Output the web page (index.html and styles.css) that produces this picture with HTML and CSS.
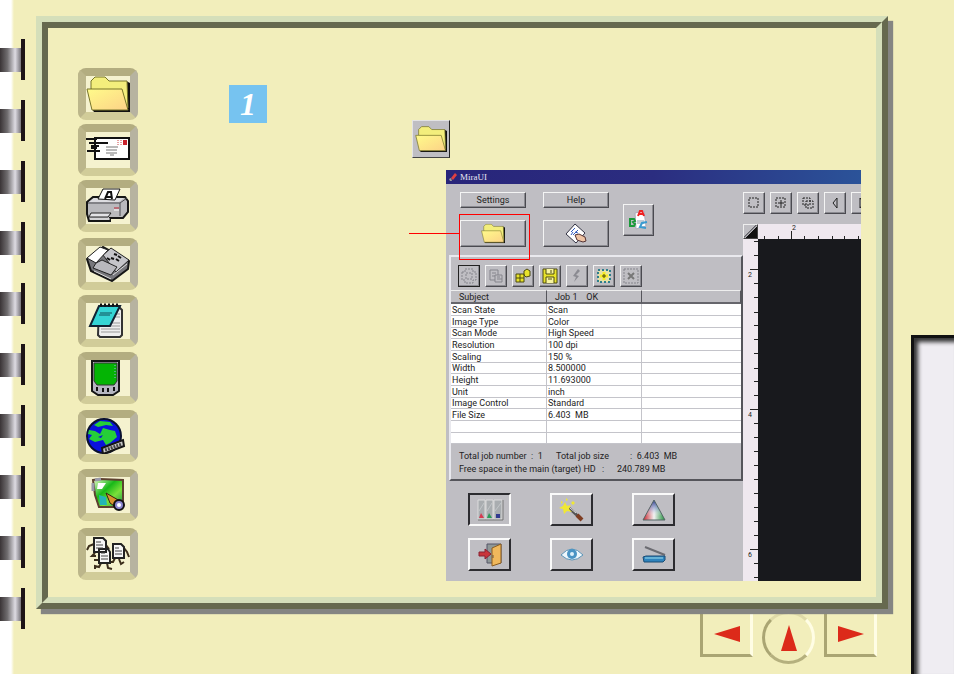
FILE: index.html
```html
<!DOCTYPE html>
<html lang="en">
<head>
  <meta charset="UTF-8" />
  <meta name="viewport" content="width=device-width, initial-scale=1.0" />
  <title>MiraUI</title>
  <link rel="stylesheet" href="styles.css">
</head>
<body>
  <svg class="defs" aria-hidden="true">
    <defs>
      <linearGradient id="paper" x1="0" y1="0" x2="1" y2="1">
        <stop offset="0" stop-color="#fffb8a"/><stop offset="1" stop-color="#fcd287"/>
      </linearGradient>
      <linearGradient id="map" x1="0" y1="0" x2="1" y2="1">
        <stop offset="0" stop-color="#f4ffd0"/><stop offset=".4" stop-color="#18b818"/><stop offset=".65" stop-color="#7be03a"/><stop offset="1" stop-color="#128a50"/>
      </linearGradient>
      <linearGradient id="tri" x1="0" y1="1" x2="1" y2="1">
        <stop offset="0" stop-color="#c8202a"/><stop offset=".5" stop-color="#f2f2f2"/><stop offset="1" stop-color="#1f8f3a"/>
      </linearGradient>
      <linearGradient id="triTop" x1="0" y1="0" x2="0" y2="1">
        <stop offset="0" stop-color="#1b2a80"/><stop offset=".5" stop-color="#8fa0d8" stop-opacity=".4"/><stop offset=".8" stop-color="#fff" stop-opacity="0"/>
      </linearGradient>
      <symbol id="folder" viewBox="0 0 44 36">
        <path d="M40 5 L44 7 V36 H8 L6 33 Z" fill="#111"/>
        <path d="M5 13 V5 L9 1 H19 L23 5 H41 L42 32 Z" fill="#f3ee7c" stroke="#77752a"/>
        <path d="M1 13 H36 L42 34 H6 Z" fill="url(#paper)" stroke="#77752a"/>
      </symbol>
    </defs>
  </svg>

  <div class="page">
    <div class="spine">
      <i class="ring"></i><i class="ring"></i><i class="ring"></i><i class="ring"></i><i class="ring"></i>
      <i class="ring"></i><i class="ring"></i><i class="ring"></i><i class="ring"></i><i class="ring"></i>
    </div>

    <main class="main">
      <div class="frame">
        <div class="frame-inner">
          <nav class="sidebar">
            <div class="group tight">
              <button class="key" aria-label="Files"><svg viewBox="0 0 44 36"><use href="#folder"/></svg></button>
              <button class="key" aria-label="E-mail">
                <svg viewBox="0 0 44 36">
                  <rect x="9" y="6" width="34" height="21" fill="#fff" stroke="#111" stroke-width="2"/>
                  <path d="M0 7 H11 M3 11 H22 M5 14 H13 M1 19 H14 M5 16 H11" stroke="#111" stroke-width="2"/>
                  <path d="M20 15 H32 M20 18 H31 M20 21 H31 M24 23 H28" stroke="#777"/>
                  <path d="M32 8 V13 M35 8 V13" stroke="#c44" stroke-dasharray="1 1"/>
                  <rect x="37" y="8" width="4" height="5" fill="#c9222c"/>
                </svg>
              </button>
              <button class="key" aria-label="Print">
                <svg viewBox="0 0 44 36">
                  <path d="M1 14 L7 9 H39 L42 13 V24 L37 30 H24 V33 H3 L1 26 Z" fill="#b9b9bd" stroke="#161616" stroke-width="2"/>
                  <path d="M3 14 H33 L38 10 H8 Z" fill="#dcdce0"/>
                  <path d="M12 11 L17 1 H34 L29 12 Z" fill="#fff" stroke="#111"/>
                  <path d="M19 11 L22 4 H25 L26 11 M20 9 H26" fill="none" stroke="#111" stroke-width="2"/>
                  <path d="M2 15 H34 L41 10 M34 15 V28" stroke="#4b4b50" fill="none"/>
                  <path d="M5 25 H25 L22 29 H3 Z" fill="#e3e3e6" stroke="#222"/>
                  <path d="M4 31 H24" stroke="#eee"/>
                  <path d="M28 20 H33" stroke="#b23" stroke-width="1"/><path d="M28 22 H33" stroke="#fff"/>
                </svg>
              </button>
            </div>
            <div class="group">
              <button class="key" aria-label="Fax">
                <svg viewBox="0 0 44 36">
                  <path d="M1 13 L17 1 L43 15 L42 23 L26 35 L5 25 Z" fill="#77777c" stroke="#161616" stroke-width="2"/>
                  <path d="M17 9 L25 2 L43 14 L30 26 Z" fill="#c5c5ca" stroke="#222"/>
                  <path d="M1 12 L14 1 L22 4 L10 17 Z" fill="#fff" stroke="#222"/>
                  <path d="M10 17 L16 14 L31 21 L25 29 L7 22 Z" fill="#b8b8bd" stroke="#222"/>
                  <path d="M8 25 L25 33 M27 29 L41 18" stroke="#ddd"/>
                  <path d="M28 8 L31 9 M32 10 L35 12 M25 12 L28 13 M30 13 L33 15 M21 12 L24 14" stroke="#111" stroke-width="2"/>
                </svg>
              </button>
              <button class="key" aria-label="Text">
                <svg viewBox="0 0 44 36">
                  <path d="M13 5 H34 L36 7 V32 L34 34 H14 L12 32 Z" fill="#eee" stroke="#333" stroke-width="2"/>
                  <path d="M15 20 H34 M15 23 H34 M15 26 H34 M15 29 H34 M25 14 H34 M27 11 H34" stroke="#999"/>
                  <path d="M13 3 H34 L24 23 H4 Z" fill="#35d5d5" stroke="#123" stroke-width="2"/>
                  <path d="M14 10 H26 M13 12 H24" stroke="#124e58"/>
                  <path d="M14 2 H34" stroke="#111" stroke-width="3" stroke-dasharray="2 2"/>
                </svg>
              </button>
              <button class="key" aria-label="Palm">
                <svg viewBox="0 0 44 36">
                  <path d="M6 1 H33 V31 L27 35 H12 L6 31 Z" fill="#b5b5c0" stroke="#161616" stroke-width="2"/>
                  <path d="M8 3 H31 V21 L28 25 H11 L8 21 Z" fill="#04b404" stroke="#333"/>
                  <path d="M29 5 V20" stroke="#9ae" stroke-dasharray="1 2"/>
                  <path d="M10 29 H12 M16 30 H18 M21 30 H23 M27 29 H29" stroke="#111" stroke-width="4"/>
                </svg>
              </button>
            </div>
            <div class="group loose">
              <button class="key" aria-label="Web">
                <svg viewBox="0 0 44 36">
                  <circle cx="18" cy="18" r="17" fill="#0a12dc" stroke="#0a1030" stroke-width="2"/>
                  <path d="M3 12 L9 13 L14 16 L17 10 L24 12 L29 13 L31 19 L24 25 L20 27 L17 22 L9 24 L3 21 L6 17 L2 16 Z" fill="#25cf38"/>
                  <path d="M8 7 L14 3 L24 4 L27 8 L20 7 L12 9 Z" fill="#25cf38"/>
                  <path d="M12 19 L17 17 L15 20 Z" fill="#0a12dc"/>
                  <path d="M16 30 L37 22 L38 28 L17 36 Z" fill="#ccc" stroke="#161616" stroke-width="2"/>
                  <path d="M19 32 L36 26" stroke="#444" stroke-width="3" stroke-dasharray="2 1"/>
                </svg>
              </button>
              <button class="key" aria-label="Image">
                <svg viewBox="0 0 44 36">
                  <path d="M7 3 L14 2 L37 3 V26 L34 30 H13 L9 18 Z" fill="url(#map)" stroke="#5d4030" stroke-width="2"/>
                  <path d="M12 6 H20 L16 12 H11 Z" fill="#fff"/>
                  <path d="M13 18 L20 20 L21 28 H14 Z" fill="#22b5b5"/>
                  <path d="M7 6 V14 M9 3 L15 2" stroke="#99a" stroke-width="3"/>
                  <path d="M20 16 L34 24 L31 31 L24 26 Z" fill="#d9942e" stroke="#321"/>
                  <circle cx="33" cy="28" r="5" fill="#8b86d0" stroke="#111" stroke-width="2"/>
                  <circle cx="33" cy="28" r="2" fill="#fff"/>
                </svg>
              </button>
              <button class="key" aria-label="Copies">
                <svg viewBox="0 0 44 36">
                  <path d="M8 8 L3 10 L1 14 M9 17 L6 20 H10 M13 24 L8 24 M15 27 L13 31 L9 30 V33 M21 27 L22 32 L26 33 M33 23 L35 28 L38 26 M29 22 L27 26 H24 M38 12 L41 16 L43 21 M20 9 L23 13" stroke="#3c2e1c" stroke-width="2" fill="none"/>
                  <path d="M8 2 H17 L20 5 V16 H8 Z M27 8 H35 L38 11 V22 H27 Z M13 13 H22 L24 16 V27 H13 Z" fill="#f6f6f6" stroke="#222" stroke-width="2"/>
                  <path d="M10 6 H15 M10 9 H17 M10 12 H17 M29 12 H33 M29 15 H36 M29 18 H36 M15 17 H19 M15 20 H22 M15 23 H22" stroke="#444"/>
                </svg>
              </button>
            </div>
          </nav>

          <section class="content">
            <div class="step">
              <span class="step-number">1</span>
              <button class="folder-button" aria-label="Scan to file"><svg viewBox="0 0 44 36"><use href="#folder"/></svg></button>
            </div>

            <div class="window">
              <header class="title-bar">
                <svg viewBox="0 0 10 10"><path d="M3 6 L7 1 L9 3 L5 8 Z" fill="#e04040"/><path d="M1 7 L3 6 L4 9 L2 9 Z" fill="#999"/></svg>
                <h1>MiraUI</h1>
              </header>

              <div class="window-body">
                <div class="controls">
                  <div class="main-buttons">
                    <button class="btn small">Settings</button>
                    <button class="btn small">Help</button>
                    <button class="btn wide target" aria-label="Scan to folder"><svg class="icon-folder" viewBox="0 0 44 36"><use href="#folder"/></svg></button>
                    <button class="btn wide" aria-label="Preview page">
                      <svg class="icon-page" viewBox="0 0 22 22">
                        <path d="M10 1 L20 10 L11 20 L1 11 Z" fill="#fff" stroke="#334"/>
                        <path d="M6 9 L10 5 M8 12 L13 7 M6 12 L8 9 M10 9 L13 10" stroke="#335bbd"/>
                        <path d="M10 12 L14 11 L20 14 L21 18 L18 19 L12 17 Z" fill="#eec3a4" stroke="#533"/>
                      </svg>
                    </button>
                    <button class="btn ocr" aria-label="Text recognition">
                      <svg viewBox="0 0 24 24">
                        <path d="M8 5 L17 3 L19 18 L9 21 Z" fill="#fff" stroke="#aab"/>
                        <path d="M10 13 H17 M10 15 H17" stroke="#89a"/>
                        <path d="M11 8 L13 3 H15 L17 8 M12 6 H16" fill="none" stroke="#e22" stroke-width="2"/>
                        <path d="M3 11 H7 L8 13 L6 14 L8 16 L7 18 H3 Z" fill="none" stroke="#1a9a3a" stroke-width="2"/>
                        <path d="M20 14 L15 15 L13 19 L19 20" fill="none" stroke="#3a9bd0" stroke-width="2"/>
                      </svg>
                    </button>
                  </div>

                  <div class="job-box">
                    <div class="job-tools">
                      <button class="tool focus" aria-label="Select"><svg viewBox="0 0 16 16"><path class="ghost" d="M1 4 H4 V1 H12 V4 H15 V12 H12 V15 H4 V12 H1 Z M5 5 H11 V11 H5 Z"/></svg></button>
                      <button class="tool" aria-label="Copy"><svg viewBox="0 0 16 16"><path class="ghost solid" d="M2 2 H10 V7 M2 2 V12 H7 M4 5 H8 M4 8 H7 M7 7 H14 V14 H7 Z M9 9 H12 M9 11 H14"/></svg></button>
                      <button class="tool" aria-label="Job queue"><svg viewBox="0 0 16 16"><path d="M1 6 H9 V14 H1 Z M5 6 V14 M1 10 H9 M9 3 L12 1 L15 3 V8 L11 9 L9 7 Z" fill="#e8e32a" stroke="#4d4a10"/></svg></button>
                      <button class="tool" aria-label="Save"><svg viewBox="0 0 16 16"><path d="M1 1 H15 V15 H1 Z" fill="#e8e32a" stroke="#4d4a10"/><path d="M4 1 V6 H12 V1 M4 15 V9 H12 V15 M6 11 H10 M9 2 V5" fill="#f8f5a0" stroke="#4d4a10"/></svg></button>
                      <button class="tool" aria-label="Run"><svg viewBox="0 0 16 16"><path d="M9 1 L11 3 L7 7 L10 8 L5 14 L7 9 L4 8 Z" fill="#8b8b92"/></svg></button>
                      <button class="tool" aria-label="Add"><svg viewBox="0 0 16 16"><rect x="2" y="2" width="12" height="12" fill="#e6e2a4" stroke="#2d7f8c" stroke-width="2" stroke-dasharray="2 2"/><path d="M8 4 V12 M4 8 H12" stroke="#f6ee20" stroke-width="3"/><path d="M8 6 V10 M6 8 H10" stroke="#4d4a10"/></svg></button>
                      <button class="tool" aria-label="Remove"><svg viewBox="0 0 16 16"><path class="ghost" d="M1 1 H15 V15 H1 Z"/><path d="M5 5 L11 11 M11 5 L5 11" stroke="#777" stroke-width="2"/></svg></button>
                    </div>

                    <table class="jobs">
                      <thead>
                        <tr><th>Subject</th><th>Job 1 &nbsp;&nbsp; OK</th><th></th></tr>
                      </thead>
                      <tbody>
                        <tr><td>Scan State</td><td>Scan</td><td></td></tr>
                        <tr><td>Image Type</td><td>Color</td><td></td></tr>
                        <tr><td>Scan Mode</td><td>High Speed</td><td></td></tr>
                        <tr><td>Resolution</td><td>100 dpi</td><td></td></tr>
                        <tr><td>Scaling</td><td>150 %</td><td></td></tr>
                        <tr><td>Width</td><td>8.500000</td><td></td></tr>
                        <tr><td>Height</td><td>11.693000</td><td></td></tr>
                        <tr><td>Unit</td><td>inch</td><td></td></tr>
                        <tr><td>Image Control</td><td>Standard</td><td></td></tr>
                        <tr><td>File Size</td><td>6.403 &nbsp;MB</td><td></td></tr>
                        <tr><td></td><td></td><td></td></tr>
                        <tr><td></td><td></td><td></td></tr>
                      </tbody>
                    </table>

                    <div class="totals">
                      <p><span class="job-count">Total job number &nbsp;: &nbsp;1</span><span class="job-size">Total job size</span><span>: &nbsp;6.403 &nbsp;MB</span></p>
                      <p><span class="free-space">Free space in the main (target) HD</span><span class="colon">:</span><span>240.789 MB</span></p>
                    </div>
                  </div>

                  <div class="actions">
                    <button class="action pressed" aria-label="Density">
                      <svg viewBox="0 0 28 24">
                        <path d="M2 2 H9 V21 H2 Z M10 2 H17 V21 H10 Z M18 2 H26 V21 H18 Z" fill="#a9adb0" stroke="#dcdcdc"/>
                        <path d="M2 22 H27 V2" fill="none" stroke="#777"/>
                        <path d="M3 13 L8 5 M11 13 L16 5 M19 13 L25 5" stroke="#c2c6c8"/>
                        <path d="M5 15 L8 20 H3 Z" fill="#d63a50"/><path d="M13 15 L16 20 H11 Z" fill="#2a9b58"/><path d="M20 16 H24 V20 H20 Z" fill="#323a90"/>
                      </svg>
                    </button>
                    <button class="action" aria-label="Auto enhance">
                      <svg viewBox="0 0 28 24">
                        <path d="M11 10 L23 21" stroke="#555" stroke-width="3"/><path d="M19 17 L24 22" stroke="#7e3d22" stroke-width="4"/><path d="M12 10 L18 15" stroke="#ddd"/>
                        <path d="M7 4 L9 8 L13 7 L11 11 L14 14 L9 13 L6 16 L5 11 L1 10 L5 8 Z" fill="#f0e832"/>
                        <path d="M15 3 L17 5 L15 7 L13 5 Z M8 0 L10 2 L8 3 Z M3 3 L5 4 L3 6 Z" fill="#f0e832"/>
                      </svg>
                    </button>
                    <button class="action" aria-label="Color">
                      <svg viewBox="0 0 28 24"><path d="M14 2 L25 22 H3 Z" fill="url(#tri)"/><path d="M14 2 L25 22 H3 Z" fill="url(#triTop)" stroke="#566"/></svg>
                    </button>
                    <button class="action" aria-label="Exit">
                      <svg viewBox="0 0 28 24">
                        <path d="M11 1 H25 V20 H11 Z" fill="#8f9898" stroke="#556"/>
                        <path d="M16 5 L25 1 V20 L16 23 Z" fill="#f0b85c" stroke="#8b5d20"/>
                        <path d="M17 12 V15" stroke="#654"/>
                        <path d="M3 9 H9 V6 L15 11 L9 16 V13 H3 Z" fill="#c9343a" stroke="#823"/>
                      </svg>
                    </button>
                    <button class="action" aria-label="Preview">
                      <svg viewBox="0 0 28 24">
                        <path d="M3 12 Q14 0 25 12 Q14 22 3 12 Z" fill="#eef7fc" stroke="#5b93b6"/>
                        <circle cx="14" cy="11" r="5" fill="#4b94c4"/><circle cx="14" cy="11" r="2" fill="#dff0fa"/>
                      </svg>
                    </button>
                    <button class="action" aria-label="Scan">
                      <svg viewBox="0 0 28 24">
                        <path d="M5 4 L25 12" stroke="#6c6c72" stroke-width="2"/>
                        <path d="M3 14 L6 13 H25 V17 L23 19 H4 Z" fill="#2e83bd" stroke="#1b4d74"/><path d="M5 15 H23" stroke="#9fe0ee"/>
                      </svg>
                    </button>
                  </div>
                </div>

                <div class="preview">
                  <div class="preview-tools">
                    <button class="tool" aria-label="Frame"><svg viewBox="0 0 16 16"><rect class="marquee" x="3" y="3" width="9" height="9"/></svg></button>
                    <button class="tool" aria-label="New frame"><svg viewBox="0 0 16 16"><rect class="marquee" x="3" y="3" width="9" height="9"/><path d="M8 5 V11 M5 8 H11" stroke="#222"/></svg></button>
                    <button class="tool" aria-label="Copy frame"><svg viewBox="0 0 16 16"><path class="marquee" d="M3 3 H10 V10 H3 Z M6 6 H13 V13 H6 Z"/></svg></button>
                    <button class="tool" aria-label="Previous"><svg viewBox="0 0 16 16"><path d="M10 3 V13 L6 8 Z" fill="none" stroke="#222"/></svg></button>
                    <button class="tool" aria-label="Next"><svg viewBox="0 0 16 16"><path d="M6 3 V13 L10 8 Z" fill="none" stroke="#222"/></svg></button>
                  </div>
                  <div class="canvas-grid">
                    <div class="corner"></div>
                    <div class="ruler">
                      <svg width="103" height="15" viewBox="0 0 103 15">
                        <path class="tick" d="M6.500 12V15M20.500 12V15M33.500 7V15M46.500 12V15M60.500 12V15M74.500 12V15M86.500 12V15M100.500 12V15"/>
                        <text x="34" y="6">2</text>
                      </svg>
                    </div>
                    <div class="ruler">
                      <svg width="15" height="342" viewBox="0 0 15 342">
                        <path class="tick" d="M11 2.500H15M11 16.500H15M7 30.500H15M11 44.500H15M11 58.500H15M11 73.500H15M11 86.500H15M11 100.500H15M11 114.500H15M11 129.500H15M11 142.500H15M11 156.500H15M7 170.500H15M11 184.500H15M11 198.500H15M11 212.500H15M11 226.500H15M11 240.500H15M11 254.500H15M11 268.500H15M11 282.500H15M11 296.500H15M7 310.500H15M11 324.500H15M11 338.500H15"/>
                        <text x="5" y="38">2</text>
                        <text x="5" y="178">4</text>
                        <text x="5" y="318">6</text>
                      </svg>
                    </div>
                    <div class="canvas"></div>
                  </div>
                </div>
              </div>
              <span class="callout"></span>
            </div>
          </section>
        </div>
      </div>

      <nav class="pager">
        <a class="page-link" href="#" aria-label="Previous page"><svg viewBox="0 0 26 18"><path d="M0 9 L26 1 V17 Z"/></svg></a>
        <a class="page-link round" href="#" aria-label="Up"><svg viewBox="0 0 18 26"><path d="M9 0 L17 26 H1 Z"/></svg></a>
        <a class="page-link" href="#" aria-label="Next page"><svg viewBox="0 0 26 18"><path d="M26 9 L0 1 V17 Z"/></svg></a>
      </nav>
    </main>

    <div class="edge"></div>
  </div>
</body>
</html>
```

FILE: styles.css
```css
* {
  box-sizing: border-box;
}
body {
  margin: 0;
  background-color: #f2eebb;
  font-family: Roboto, "Liberation Sans", sans-serif;
  font-size: 9px;
  color: #222;
}
.defs {
  position: absolute;
  width: 0;
  height: 0;
}
button {
  padding: 0;
  font: inherit;
  color: inherit;
  display: flex;
  align-items: center;
  justify-content: center;
  cursor: pointer;
}
.page {
  display: grid;
  grid-template-columns: 36px 1fr 66px;
  min-height: 100vh;
}

/* binding on the left */
.spine {
  display: flex;
  flex-direction: column;
  gap: 20px;
  padding-top: 39px;
  background: linear-gradient(to right, #fff 11px, #f2eebb 14px);
}
.ring {
  width: 25px;
  height: 41px;
  padding: 9px 0;
  border-right: 4px solid #1d1417;
}
.ring::before {
  content: "";
  display: block;
  height: 24px;
  background: linear-gradient(to right, #3a3436, #6f6c6e 35%, #dedbe2 72%, #77747a);
}

/* bevelled frame */
.main {
  min-width: 0;
}
.frame {
  position: relative;
  z-index: 1;
  margin-top: 16px;
  border: 6px solid;
  border-color: #d5dfba #66694f #66694f #d5dfba;
  box-shadow: 5px 5px 1px #858582;
}
.frame-inner {
  display: flex;
  border: 6px solid;
  border-color: #66694f #d5dfba #d5dfba #66694f;
  background-color: #f2eebb;
}
.sidebar {
  display: flex;
  flex-direction: column;
  gap: 6px;
  padding: 40px 0 16px 30px;
}
.group {
  display: flex;
  flex-direction: column;
  gap: 5px;
}
.group.tight {
  gap: 4px;
}
.group.loose {
  gap: 7px;
}
.key {
  width: 60px;
  height: 52px;
  border: 8px solid;
  border-color: #b3ad80 #b7b3a0 #d1cc99 #bcb68b;
  border-radius: 8px;
  background-color: #f5f2cf;
}
.key svg {
  width: 44px;
  height: 36px;
}
.content {
  flex: 1;
  min-width: 0;
  padding: 57px 15px 16px 91px;
}
.step {
  display: flex;
  gap: 145px;
  height: 73px;
}
.step-number {
  width: 38px;
  height: 38px;
  background-color: #76c3f0;
  color: #fff;
  font: italic bold 32px/38px "Liberation Serif", serif;
  text-align: center;
}
.folder-button {
  align-self: flex-end;
  width: 38px;
  height: 38px;
  background-color: #bfbec3;
  border: 1px solid;
  border-color: #e4e4e4 #222 #444 #e4e4e4;
}
.folder-button svg {
  width: 32px;
  height: 28px;
}

/* scanner window */
.window {
  position: relative;
  margin: 12px 0 0 217px;
  background-color: #bfbec3;
}
.title-bar {
  display: flex;
  align-items: center;
  gap: 2px;
  height: 14px;
  padding-left: 2px;
  background: linear-gradient(to right, #28257a, #2b2d80 50%, #2b5399);
}
.title-bar svg {
  width: 10px;
  height: 10px;
}
.title-bar h1 {
  margin: 0;
  color: #e8e8f4;
  font: 9px/14px "Liberation Serif", serif;
}
.window-body {
  display: grid;
  grid-template-columns: 297px 1fr;
}
.main-buttons {
  display: grid;
  grid-template-columns: 66px 66px 31px;
  grid-template-rows: 16px 27px;
  gap: 12px 17px;
  padding: 8px 0 8px 14px;
}
.btn,
.tool,
.action {
  background-color: #bfbec3;
  border: 1px solid;
  border-color: #f4f4f4 #4a4a50 #4a4a50 #f4f4f4;
}
.btn {
  box-shadow: inset -1px -1px #8a8a90;
}
.btn .icon-folder {
  width: 24px;
  height: 21px;
}
.btn .icon-page {
  width: 22px;
  height: 22px;
}
.btn.ocr {
  grid-column: 3;
  grid-row: 1 / 3;
  align-self: center;
  margin-left: -3px;
  width: 31px;
  height: 32px;
}
.btn.ocr svg {
  width: 24px;
  height: 24px;
}
.job-box {
  margin-left: 3px;
  border: 2px solid;
  border-color: #e9e9ee #55555b #55555b #e9e9ee;
}
.job-tools {
  display: flex;
  gap: 5px;
  padding: 8px 7px 3px;
}
.tool {
  flex: none;
  width: 22px;
  height: 22px;
  box-shadow: inset -1px -1px #8a8a90;
}
.tool svg {
  width: 16px;
  height: 16px;
}
.tool.focus {
  border-color: #222;
}
.ghost {
  fill: none;
  stroke: #85858c;
  stroke-width: 1;
  stroke-dasharray: 2 1;
}
.ghost.solid {
  stroke-dasharray: none;
}
.marquee {
  fill: none;
  stroke: #222;
  stroke-dasharray: 2 1;
}
.jobs {
  width: 100%;
  table-layout: fixed;
  border-collapse: separate;
  border-spacing: 0;
  background-color: #fff;
  line-height: 10px;
}
.jobs th {
  height: 14px;
  padding: 0 0 0 8px;
  background-color: #bfbec3;
  border: solid;
  border-width: 1px 1px 2px 0;
  border-color: #eee #55555b #66666c;
  font-weight: normal;
  text-align: left;
}
.jobs th:first-child,
.jobs td:first-child {
  width: 96px;
}
.jobs th:nth-child(2),
.jobs td:nth-child(2) {
  width: 95px;
}
.jobs td {
  height: 12px;
  padding: 0 1px;
  border-right: 1px solid #c4c4ca;
  border-bottom: 1px solid #c4c4ca;
  white-space: nowrap;
}
.jobs tr:nth-child(3n) td {
  height: 11px;
}
.jobs td:last-child {
  border-right: 0;
}
.totals {
  padding: 6px 8px 3px;
}
.totals p {
  display: flex;
  margin: 0;
  line-height: 13px;
  white-space: nowrap;
}
.job-count {
  width: 97px;
}
.job-size {
  width: 74px;
}
.free-space {
  width: 143px;
}
.colon {
  width: 15px;
}
.actions {
  display: grid;
  grid-template-columns: repeat(3, 43px);
  gap: 12px 39px;
  padding: 12px 0 9px 22px;
}
.action {
  height: 33px;
  border-width: 2px;
  border-color: #fafafa #2c2c30 #2c2c30 #fafafa;
}
.action.pressed {
  border-color: #2c2c30 #fafafa #fafafa #2c2c30;
}
.action svg {
  width: 28px;
  height: 24px;
}

/* preview side */
.preview {
  display: flex;
  flex-direction: column;
  min-width: 0;
}
.preview-tools {
  display: flex;
  gap: 5px;
  height: 40px;
  padding-top: 8px;
  overflow: hidden;
}
.canvas-grid {
  flex: 1;
  display: grid;
  grid-template-columns: 15px 1fr;
  grid-template-rows: 15px 1fr;
}
.corner {
  border: 1px solid;
  border-color: #eee #444 #444 #eee;
  background: linear-gradient(135deg, #bfbec3 45%, #55555b 45%, #bfbec3 55%, #111 55%);
}
.ruler {
  overflow: hidden;
  background-color: #efe8ef;
}
.ruler svg {
  display: block;
}
.ruler text {
  font-size: 7px;
  fill: #222;
}
.tick {
  fill: none;
  stroke: #222;
}
.canvas {
  background-color: #18191d;
}

/* red marker round the folder button, with its leader line */
.callout {
  position: absolute;
  left: 13px;
  top: 44px;
  width: 71px;
  height: 46px;
  border: 1px solid #f00;
  pointer-events: none;
}
.callout::before {
  content: "";
  position: absolute;
  right: 100%;
  top: 18px;
  width: 51px;
  height: 1px;
  background-color: #f00;
}

/* page turning */
.pager {
  display: flex;
  justify-content: flex-end;
  align-items: flex-start;
  gap: 9px;
  padding: 2px 11px 0 0;
}
.page-link {
  display: flex;
  align-items: center;
  justify-content: center;
  width: 53px;
  height: 46px;
  border: 3px solid;
  border-color: #f2eebb #fffde4 #aaa573 #aaa573;
}
.page-link svg {
  width: 26px;
  height: 18px;
  fill: #dc2a1a;
}
.page-link.round {
  height: 53px;
  border-color: #dfdaa8 #fffde4 #b5b07e #aaa573;
  border-radius: 50%;
}
.page-link.round svg {
  width: 18px;
  height: 26px;
}

/* sheet showing behind the page */
.edge {
  margin: 335px 0 0 23px;
  border: solid #111;
  border-width: 3px 0 0 3px;
  background-color: #efedf2;
  box-shadow: inset 4px 4px 4px #333;
}
```
